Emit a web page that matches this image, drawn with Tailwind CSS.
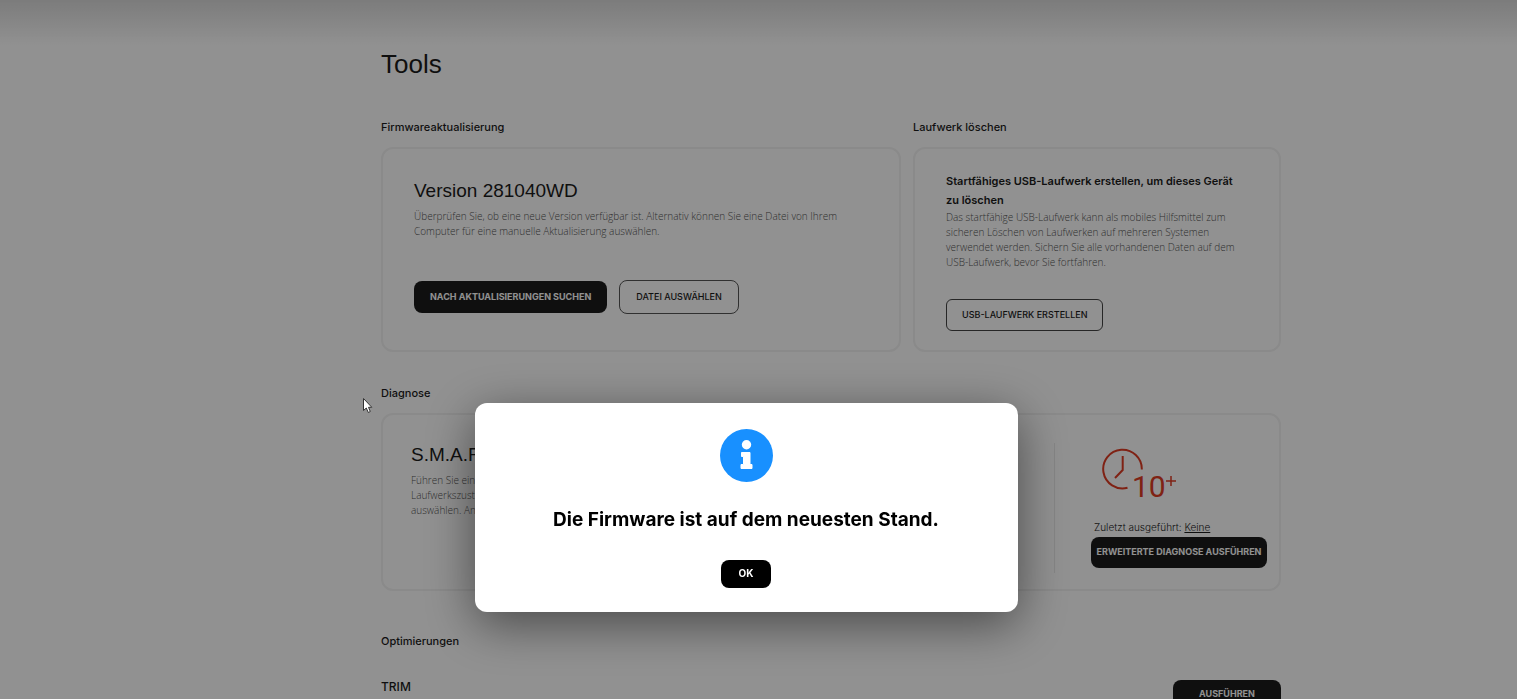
<!DOCTYPE html>
<html lang="de" class="h-full">
<head>
    <meta charset="UTF-8">
    <meta name="viewport" content="width=device-width, initial-scale=1.0">
    <title>Tools</title>
    <script src="https://cdn.jsdelivr.net/npm/@tailwindcss/browser@4"></script>
</head>
<body class="h-full overflow-hidden bg-white font-[Inter,sans-serif] text-[#1c1c1c]">
    <main class="h-full overflow-hidden bg-linear-to-b from-[#dadada] to-white to-[45px] pl-[381px] pr-8">
        <div class="max-w-[900px]">
            <h1 class="pt-12 text-[26px] leading-8 font-[Liberation_Sans,sans-serif]">Tools</h1>

            <div class="grid grid-cols-[520fr_368fr] gap-3 pt-[39px]">
                <section class="flex flex-col">
                    <h2 class="mb-3 text-[11px] leading-4 font-medium">Firmwareaktualisierung</h2>
                    <div class="flex-1 rounded-xl border-2 border-[#f2f2f2] px-[31px] pt-[30px]">
                        <h3 class="text-[19px] leading-6 font-[Liberation_Sans,sans-serif]">Version 281040WD</h3>
                        <p class="pt-1.5 text-[10px] leading-[15px] font-light font-[Open_Sans,sans-serif] text-[#555]">Überprüfen Sie, ob eine neue Version verfügbar ist. Alternativ können Sie eine Datei von Ihrem Computer für eine manuelle Aktualisierung auswählen.</p>
                        <div class="flex items-center gap-3 pt-[41px]">
                            <button type="button" class="h-8 rounded-lg bg-[#1c1c1c] px-4 pb-px text-[9px] font-bold text-white">NACH AKTUALISIERUNGEN SUCHEN</button>
                            <button type="button" class="h-[34px] rounded-lg border border-[#555] px-4 pb-px text-[9px] font-medium">DATEI AUSWÄHLEN</button>
                        </div>
                    </div>
                </section>
                <section class="flex flex-col">
                    <h2 class="mb-3 text-[11px] leading-4 font-medium">Laufwerk löschen</h2>
                    <div class="flex-1 rounded-xl border-2 border-[#f2f2f2] px-[31px] pt-[23px] pb-[19px]">
                        <h3 class="text-[11px] leading-[19px] font-semibold">Startfähiges USB-Laufwerk erstellen, um dieses Gerät zu löschen</h3>
                        <p class="text-[10px] leading-[15px] font-light font-[Open_Sans,sans-serif] text-[#555]">Das startfähige USB-Laufwerk kann als mobiles Hilfsmittel zum sicheren Löschen von Laufwerken auf mehreren Systemen verwendet werden. Sichern Sie alle vorhandenen Daten auf dem USB-Laufwerk, bevor Sie fortfahren.</p>
                        <button type="button" class="mt-[29px] h-8 rounded-md border border-[#444] px-[15px] pb-px text-[9px] font-medium">USB-LAUFWERK ERSTELLEN</button>
                    </div>
                </section>
            </div>

            <section class="pt-[33px]">
                <h2 class="mb-3 text-[11px] leading-4 font-medium">Diagnose</h2>
                <div class="flex h-[178px] rounded-xl border-2 border-[#f2f2f2] pt-7 pr-3 pb-4 pl-7">
                    <div class="flex-1">
                        <h3 class="text-[19px] leading-6 font-[Liberation_Sans,sans-serif]">S.M.A.R.T.</h3>
                        <p class="w-60 pt-1.5 text-[10px] leading-[15px] font-light font-[Open_Sans,sans-serif] text-[#555]">Führen Sie eine Diagnose des<br>Laufwerkszustands aus oder<br>auswählen. Anschließend</p>
                    </div>
                    <div class="flex flex-col items-start border-l border-[#e9e9e9] pl-9">
                        <svg class="ml-[10px] mt-1 h-[54px] w-[76px] shrink-0" viewBox="0 0 76 54" fill="none" stroke="#e03c24" stroke-width="2" role="img" aria-label="10+">
                            <path d="M26.500 40.700A19.300 19.300 0 1 1 40.800 22.500"/>
                            <path d="M21.700 9V23L14 31"/>
                            <text x="31" y="50" fill="#e03c24" stroke="none" class="font-[Roboto,sans-serif] text-[30px]">10</text>
                            <path d="M70 29V39M65 34H75" stroke-width="1.500"/>
                        </svg>
                        <p class="ml-[3px] mt-[18px] text-[10px] leading-4 font-light">Zuletzt ausgeführt: <a href="#" class="underline">Keine</a></p>
                        <button type="button" class="mt-0.5 h-[31px] w-44 shrink-0 rounded-lg bg-[#1c1c1c] pb-px text-[9px] font-bold whitespace-nowrap text-white">ERWEITERTE DIAGNOSE AUSFÜHREN</button>
                    </div>
                </div>
            </section>

            <section class="pt-[42px]">
                <h2 class="text-[11px] leading-4 font-medium">Optimierungen</h2>
                <div class="flex items-start justify-between pt-[31px]">
                    <h3 class="text-xs leading-[14px] font-medium">TRIM</h3>
                    <button type="button" class="h-8 w-[108px] rounded-lg bg-[#1c1c1c] pb-1 text-[9px] font-bold text-white">AUSFÜHREN</button>
                </div>
            </section>
        </div>
    </main>

    <!-- Modal -->
    <div class="fixed inset-0 flex items-start justify-center bg-black/43 pr-[25px] pt-[403px]">
        <div role="dialog" aria-modal="true" aria-labelledby="dialogTitle" class="flex w-[543px] flex-col items-center rounded-xl bg-white pt-[26px] pb-6 text-black shadow-[0_12px_50px_rgba(0,0,0,0.5)]">
            <svg class="size-[53px]" viewBox="0 0 53 53" aria-hidden="true">
                <circle cx="26.500" cy="26.500" r="26.500" fill="#1890ff"/>
                <circle cx="26.500" cy="15.700" r="4.700" fill="#fff"/>
                <path fill="#fff" d="M21.500 23.500H30V35.500H32V39.500H21V35.500H23.500V27.500H21.500Z" stroke="#fff" stroke-linejoin="round"/>
            </svg>
            <h2 id="dialogTitle" class="pt-6 text-[19px] leading-7 font-bold">Die Firmware ist auf dem neuesten Stand.</h2>
            <button type="button" class="mt-[26px] h-7 w-[50px] rounded-lg bg-black pb-px text-[10px] font-bold text-white">OK</button>
        </div>
    </div>

    <!-- Cursor -->
    <svg class="pointer-events-none fixed left-[362px] top-[397px] h-[17px] w-[11px]" viewBox="0 0 11 17" fill="#fff" stroke="#333" aria-hidden="true">
        <path d="M1.500 1.500V13.500L4.300 11L6.300 15.500L8.300 14.500L6.500 10.300H9.800Z"/>
    </svg>
</body>
</html>
